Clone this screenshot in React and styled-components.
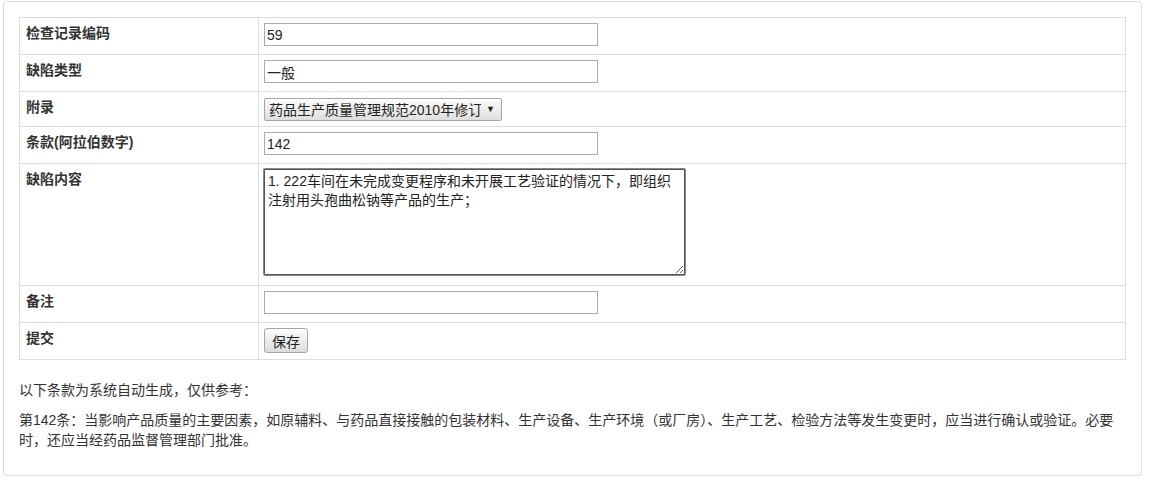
import React from 'react';
import styled, { createGlobalStyle } from 'styled-components';

const GlobalStyle = createGlobalStyle`
  html, body {
    margin: 0;
    padding: 0;
    background: #fff;
  }
  body {
    padding: 1px 12px 0 3px;
    font-family: "Liberation Sans", "Noto Sans CJK SC", sans-serif;
    font-size: 14px;
    line-height: 20px;
    color: #333;
  }
`;

const Panel = styled.div`
  border: 1px solid #ddd;
  border-radius: 4px;
  box-shadow: 0 1px 1px rgba(0, 0, 0, 0.05);
  padding: 15px;
  background: #fff;
`;

const Table = styled.table`
  width: 100%;
  border-collapse: collapse;
  border-spacing: 0;
  margin-bottom: 20px;
  border: 1px solid #ddd;
`;

const Label = styled.th`
  width: 227px;
  text-align: left;
  vertical-align: top;
  font-weight: bold;
  padding: 5px 5px 5px 6px;
  border: 1px solid #ddd;
`;

const Cell = styled.td`
  vertical-align: top;
  padding: 5px;
  border: 1px solid #ddd;
`;

const TextInput = styled.input`
  display: block;
  box-sizing: border-box;
  width: 334px;
  height: 23px;
  margin: 0 0 3px 0;
  padding: 1px 2px;
  border: 1px solid #a9a9a9;
  border-radius: 0;
  font-family: inherit;
  font-size: 14px;
  color: #222;
  background: #fff;
  outline: none;
`;

const SelectWrap = styled.div`
  position: relative;
  width: 238px;
  margin: 1px 0 0 0;
`;

const Select = styled.select`
  display: block;
  box-sizing: border-box;
  width: 238px;
  height: 23px;
  padding: 0 20px 0 4px;
  appearance: none;
  -webkit-appearance: none;
  border: 1px solid #a6a6a6;
  border-radius: 2px;
  background: linear-gradient(#fcfcfc, #dedede);
  font-family: inherit;
  font-size: 14px;
  color: #222;
  outline: none;
`;

const Arrow = styled.span`
  position: absolute;
  right: 7px;
  top: 5px;
  font-size: 9px;
  line-height: 12px;
  color: #222;
  pointer-events: none;
`;

const TextArea = styled.textarea`
  display: block;
  box-sizing: border-box;
  width: 421px;
  height: 106px;
  margin: 0 0 5px 0;
  padding: 2px 3px;
  border: 1px solid #555;
  box-shadow: 0 0 0 1px #888;
  border-radius: 1px;
  font-family: inherit;
  font-size: 14px;
  line-height: 19px;
  color: #222;
  resize: both;
  outline: none;
`;

const Button = styled.button`
  display: block;
  height: 25px;
  margin: 0 0 1px 0;
  padding: 0 7px;
  border: 1px solid #a6a6a6;
  border-radius: 3px;
  background: linear-gradient(#fcfcfc, #dcdcdc);
  font-family: inherit;
  font-size: 14px;
  color: #222;
`;

const Note = styled.p`
  margin: 0 0 10px 0;
  line-height: 20px;
`;

const rows = [
  { label: '检查记录编码', kind: 'input', value: '59' },
  { label: '缺陷类型', kind: 'input', value: '一般' },
  { label: '附录', kind: 'select', value: '药品生产质量管理规范2010年修订' },
  { label: '条款(阿拉伯数字)', kind: 'input', value: '142' },
  {
    label: '缺陷内容',
    kind: 'textarea',
    value: '1. 222车间在未完成变更程序和未开展工艺验证的情况下，即组织注射用头孢曲松钠等产品的生产；',
  },
  { label: '备注', kind: 'input', value: '' },
  { label: '提交', kind: 'button', value: '保存' },
];

function Field({ kind, value }) {
  if (kind === 'select') {
    return (
      <SelectWrap>
        <Select defaultValue={value}>
          <option>{value}</option>
        </Select>
        <Arrow>▼</Arrow>
      </SelectWrap>
    );
  }
  if (kind === 'textarea') return <TextArea defaultValue={value} />;
  if (kind === 'button') return <Button type="button">{value}</Button>;
  return <TextInput type="text" defaultValue={value} />;
}

export default function App() {
  return (
    <>
      <GlobalStyle />
      <Panel>
        <Table>
          <tbody>
            {rows.map((r) => (
              <tr key={r.label}>
                <Label>{r.label}</Label>
                <Cell>
                  <Field kind={r.kind} value={r.value} />
                </Cell>
              </tr>
            ))}
          </tbody>
        </Table>
        <Note>以下条款为系统自动生成，仅供参考：</Note>
        <Note>
          第142条：当影响产品质量的主要因素，如原辅料、与药品直接接触的包装材料、生产设备、生产环境（或厂房）、生产工艺、检验方法等发生变更时，应当进行确认或验证。必要时，还应当经药品监督管理部门批准。
        </Note>
      </Panel>
    </>
  );
}
